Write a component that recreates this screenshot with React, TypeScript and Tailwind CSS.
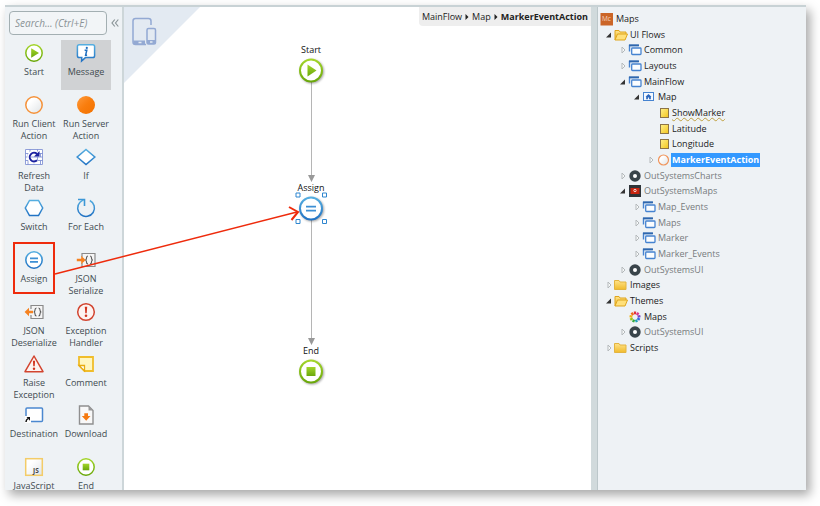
import type { ReactNode } from "react";

/* ---------- toolbox icons (20 x 20) ---------- */

function Gradients() {
  return (
    <svg className="absolute h-0 w-0" aria-hidden="true">
      <defs>
        <linearGradient id="green" x1="0" y1="0" x2="0" y2="1">
          <stop offset="0" stopColor="#a3d52a" />
          <stop offset="1" stopColor="#6aa80a" />
        </linearGradient>
        <linearGradient id="blue" x1="0" y1="0" x2="0" y2="1">
          <stop offset="0" stopColor="#55aee0" />
          <stop offset="1" stopColor="#2273c4" />
        </linearGradient>
        <linearGradient id="orange" x1="0" y1="0" x2="1" y2="1">
          <stop offset="0" stopColor="#ff9a3c" />
          <stop offset="0.5" stopColor="#f97d0d" />
          <stop offset="1" stopColor="#f27200" />
        </linearGradient>
        <linearGradient id="pale" x1="0" y1="0" x2="1" y2="1">
          <stop offset="0.3" stopColor="#ffffff" />
          <stop offset="1" stopColor="#dfe3e6" />
        </linearGradient>
        <linearGradient id="folder" x1="0" y1="0" x2="0" y2="1">
          <stop offset="0" stopColor="#ffe38a" />
          <stop offset="1" stopColor="#f0bb2c" />
        </linearGradient>
        <linearGradient id="yellow" x1="0" y1="0" x2="1" y2="1">
          <stop offset="0" stopColor="#fff08a" />
          <stop offset="1" stopColor="#f3c51c" />
        </linearGradient>
      </defs>
    </svg>
  );
}

function Icon({ children }: { children: ReactNode }) {
  return (
    <svg viewBox="0 0 20 20" className="h-5 w-5 shrink-0" fill="none" aria-hidden="true">
      {children}
    </svg>
  );
}

const icons = {
  start: (
    <Icon>
      <circle cx="10" cy="10" r="8.2" fill="#fff" stroke="url(#green)" strokeWidth="1.5" />
      <path d="M7.2 5.2 15 10l-7.8 4.8z" fill="url(#green)" />
    </Icon>
  ),
  message: (
    <Icon>
      <path d="M3.2 1.8h13.6c1.2 0 1.8.7 1.8 1.8v9.2c0 1.1-.7 1.8-1.8 1.8H9.4L5.600 18l.2-3.400H3.200c-1.100 0-1.800-.7-1.800-1.800V3.600c0-1.100.7-1.800 1.800-1.800z" fill="#fff" stroke="url(#blue)" strokeWidth="1.5" />
      <circle cx="10.8" cy="4.9" r="1.1" fill="#1f6fc0" />
      <path d="M8.6 7.2h2.2l-1.2 5h1.5" stroke="#1f6fc0" strokeWidth="1.5" />
    </Icon>
  ),
  client: (
    <Icon>
      <circle cx="10" cy="10" r="8.2" fill="url(#pale)" stroke="#f5923a" strokeWidth="1.5" />
    </Icon>
  ),
  server: (
    <Icon>
      <circle cx="10" cy="10" r="9" fill="url(#orange)" />
    </Icon>
  ),
  refresh: (
    <Icon>
      <path d="M1 2h18v16H1z" fill="#fff" />
      <path d="M1.5 2.5h17v15h-17zM1.5 6.500h17M1.5 10h17M1.5 13.500h17" stroke="#7486cf" strokeWidth="0.8" />
      <path d="M6 2.5v4M13.500 2.5v4M4 6.500V10M16.500 6.500V10M6 10v3.500M13.500 10v3.500M4 13.500v4M10 13.500v4M16.500 13.500v4" stroke="#7486cf" strokeWidth="0.8" />
      <path d="M13.500 6.400A5 5 0 1 0 13.500 13.600" stroke="#fff" strokeWidth="3.500" />
      <path d="M13 7A4.300 4.300 0 1 0 13 13.200" stroke="#1c22a0" strokeWidth="2" />
      <path d="M15.500 4v5.500H10z" fill="#1c22a0" />
    </Icon>
  ),
  condition: (
    <Icon>
      <path d="M10 2.5 18.8 10 10 17.5 1.2 10z" fill="#fff" stroke="url(#blue)" strokeWidth="1.6" />
    </Icon>
  ),
  switch: (
    <Icon>
      <path d="M5.5 2.5h9L18.7 10l-4.2 7.5h-9L1.3 10z" fill="#fff" stroke="url(#blue)" strokeWidth="1.5" />
    </Icon>
  ),
  forEach: (
    <Icon>
      <path d="M13.800 2.500A8.400 8.400 0 1 1 4 4.200L7.500 1.600" stroke="url(#blue)" strokeWidth="1.5" />
      <path d="M2 1.500h6.500V8" stroke="#3d97d6" strokeWidth="1.6" />
    </Icon>
  ),
  assign: (
    <Icon>
      <circle cx="10" cy="10" r="8.2" fill="#fff" stroke="url(#blue)" strokeWidth="1.6" />
      <path d="M6 8.3h8M6 11.8h8" stroke="#3d8fd4" strokeWidth="1.7" />
    </Icon>
  ),
  serialize: (
    <Icon>
      <path d="M6 7V3.5h13v13H6V13" stroke="#8a8a8a" strokeWidth="1.2" fill="#f5f5f5" />
      <path d="M12 6c-1.5 0-1.5.6-1.5 2 0 1.2-.2 1.8-1.2 2 1 .2 1.2.8 1.2 2 0 1.4 0 2 1.5 2M14 6c1.5 0 1.5.6 1.5 2 0 1.2.2 1.8 1.2 2-1 .2-1.2.8-1.2 2 0 1.4 0 2-1.5 2" stroke="#555" strokeWidth="1.1" />
      <path d="M.8 8.7h4.4V5.8L9.6 10l-4.4 4.2v-2.9H.8z" fill="#f58220" />
    </Icon>
  ),
  deserialize: (
    <Icon>
      <path d="M7 7V3.5h12v13H7V13" stroke="#8a8a8a" strokeWidth="1.2" fill="#f5f5f5" />
      <path d="M12.5 6c-1.5 0-1.5.6-1.5 2 0 1.2-.2 1.8-1.2 2 1 .2 1.2.8 1.2 2 0 1.4 0 2 1.5 2M14.5 6c1.5 0 1.5.6 1.5 2 0 1.2.2 1.8 1.2 2-1 .2-1.2.8-1.2 2 0 1.4 0 2-1.5 2" stroke="#555" strokeWidth="1.1" />
      <path d="M9 8.7H5V5.8L.6 10 5 14.2v-2.9h4z" fill="#f58220" />
    </Icon>
  ),
  exception: (
    <Icon>
      <circle cx="10" cy="10" r="8.3" fill="#fdf3f1" stroke="#d2442f" strokeWidth="1.5" />
      <path d="M8.8 4.8h2.4l-.5 6.4H9.3z" fill="#d2341f" />
      <circle cx="10" cy="13.8" r="1.3" fill="#d2341f" />
    </Icon>
  ),
  raise: (
    <Icon>
      <path d="M10 2 19 17.7H1z" fill="#fdf3f1" stroke="#d2442f" strokeWidth="1.5" strokeLinejoin="round" />
      <path d="M8.9 6.8h2.2l-.4 5.4H9.3z" fill="#d2341f" />
      <circle cx="10" cy="14.7" r="1.2" fill="#d2341f" />
    </Icon>
  ),
  comment: (
    <Icon>
      <path d="M3 3h14v14H8.5L3 11.5z" fill="#fff6c0" stroke="#f0bd2b" strokeWidth="1.8" />
      <path d="M3 11.5h5.5V17z" fill="#fff" stroke="#e8ab10" strokeWidth="1.3" />
    </Icon>
  ),
  destination: (
    <Icon>
      <rect x="2" y="3" width="16.5" height="13.5" rx="1" fill="#fff" stroke="#4b88d0" strokeWidth="1.5" />
      <path d="M1 11h6v7H1z" fill="#fff" />
      <path d="M2 17c0-1.600.5-2.500 2-3.500" stroke="#111" strokeWidth="1.5" />
      <path d="M2.500 12h3.500v3.800z" fill="#111" />
    </Icon>
  ),
  download: (
    <Icon>
      <path d="M3.5 1h9L17 5.5V19H3.5z" fill="#f8f8f8" stroke="#8f8f8f" strokeWidth="1.4" />
      <path d="M12.5 1v4.5H17z" fill="#999" />
      <path d="M8.3 8.2H12v2.9h2.5l-4.3 4.7-4.400-4.700h2.500z" fill="#f57a10" />
    </Icon>
  ),
  javascript: (
    <Icon>
      <rect x="1.7" y="1.7" width="16.6" height="16.6" fill="url(#pale)" stroke="#f3cc68" strokeWidth="1.5" />
      <text x="9" y="16.2" fontSize="6.5" fontWeight="700" fill="#444" fontFamily="Open Sans">JS</text>
    </Icon>
  ),
  end: (
    <Icon>
      <circle cx="10" cy="10" r="8.2" fill="#fff" stroke="url(#green)" strokeWidth="1.5" />
      <rect x="6.7" y="6.7" width="6.6" height="6.6" fill="url(#green)" />
    </Icon>
  ),
};

const tools: { label: string; icon: keyof typeof icons; active?: boolean }[] = [
  { label: "Start", icon: "start" },
  { label: "Message", icon: "message", active: true },
  { label: "Run Client\nAction", icon: "client" },
  { label: "Run Server\nAction", icon: "server" },
  { label: "Refresh\nData", icon: "refresh" },
  { label: "If", icon: "condition" },
  { label: "Switch", icon: "switch" },
  { label: "For Each", icon: "forEach" },
  { label: "Assign", icon: "assign" },
  { label: "JSON\nSerialize", icon: "serialize" },
  { label: "JSON\nDeserialize", icon: "deserialize" },
  { label: "Exception\nHandler", icon: "exception" },
  { label: "Raise\nException", icon: "raise" },
  { label: "Comment", icon: "comment" },
  { label: "Destination", icon: "destination" },
  { label: "Download", icon: "download" },
  { label: "JavaScript", icon: "javascript" },
  { label: "End", icon: "end" },
];

function Toolbox() {
  return (
    <aside className="flex w-[119px] shrink-0 flex-col overflow-hidden border-r-2 border-[#cdd6d9] bg-[#eef2f5]">
      <div className="flex items-center gap-1 pt-1 pl-1">
        <input
          type="search"
          aria-label="Search"
          placeholder="Search... (Ctrl+E)"
          className="h-6 w-[98px] rounded-[4px] border border-[#a3afb2] bg-[#f2f5f7] px-[5px] text-[10px] italic placeholder:text-[#8a9396]"
        />
        <button type="button" aria-label="Collapse toolbox" className="text-[#8b9598]">
          <svg viewBox="0 0 8 8" className="h-2 w-2" fill="none" stroke="currentColor" strokeWidth="1.2">
            <path d="M3.8.5 1 4l2.8 3.5M7.3.5 4.5 4l2.8 3.5" />
          </svg>
        </button>
      </div>
      <div className="mt-[5px] ml-[3px] grid h-[466px] shrink-0 auto-rows-fr grid-cols-[52px_52px]">
        {tools.map((tool) => (
          <button
            key={tool.label}
            type="button"
            className={`mx-px flex h-[50px] flex-col items-center gap-[3px] pt-[3px] text-[9px] leading-3 whitespace-pre text-[#414b50] ${tool.active ? "bg-[#d0d2d4]" : ""}`}
          >
            {icons[tool.icon]}
            <span>{tool.label}</span>
          </button>
        ))}
      </div>
    </aside>
  );
}

/* ---------- flow canvas ---------- */

function FlowNode({ kind, label, className }: { kind: "start" | "assign" | "end"; label: string; className: string }) {
  return (
    <div className={`absolute left-[162px] flex w-[50px] flex-col items-center text-[9px] leading-3 text-[#111] ${className}`}>
      <span>{label}</span>
      <svg viewBox="0 0 36 32" className="h-8 w-9 drop-shadow-[1px_1px_1px_rgba(0,0,0,0.35)]" fill="none" aria-hidden="true">
        <circle cx="18" cy="14.5" r="11" fill="#fff" stroke={kind === "assign" ? "url(#blue)" : "url(#green)"} strokeWidth="2" />
        {kind === "start" && <path d="M14.5 8.5l9 6-9 6z" fill="url(#green)" />}
        {kind === "end" && <path d="M13.5 10h9v9h-9z" fill="url(#green)" />}
        {kind === "assign" && <path d="M13 12.7h10M13 16.7h10" stroke="#3d8fd4" strokeWidth="1.7" />}
      </svg>
    </div>
  );
}

function Canvas() {
  return (
    <main className="relative min-w-0 flex-1 overflow-hidden bg-white">
      <svg viewBox="0 0 76 76" className="absolute top-0 left-0 h-[76px] w-[76px]" fill="none" aria-hidden="true">
        <path d="M0 0h76L0 76z" fill="#e3eaf2" />
        <g transform="translate(0 1)">
          <path d="M27 17v-4c0-1.5-1-2.5-2.5-2.5h-13C10 10.5 9 11.5 9 13v21c0 1.5 1 2.5 2.5 2.5H22" stroke="#93a9d3" strokeWidth="1.5" />
          <path d="M9 32.5h12v4H10z" fill="#93a9d3" />
          <rect x="23" y="20.5" width="8.5" height="15.5" rx="1.5" stroke="#93a9d3" strokeWidth="1.5" />
          <path d="M23 32h8.5v4H23z" fill="#93a9d3" />
          <path d="M14.5 34.500h3M26 34h2.5" stroke="#e3eaf2" strokeWidth="1.5" />
        </g>
      </svg>

      <nav aria-label="Breadcrumb" className="absolute top-0 right-0 flex h-[19px] items-center gap-[3px] rounded-bl bg-[#eeeeee] px-[3px] text-[9px] text-[#222]">
        <a href="#mainflow">MainFlow</a>
        <svg viewBox="0 0 4 6" className="h-[6px] w-1" aria-hidden="true"><path d="M.5 0l3 3-3 3z" fill="#222" /></svg>
        <a href="#map">Map</a>
        <svg viewBox="0 0 4 6" className="h-[6px] w-1" aria-hidden="true"><path d="M.5 0l3 3-3 3z" fill="#222" /></svg>
        <strong className="font-bold">MarkerEventAction</strong>
      </nav>

      <svg viewBox="0 0 10 270" className="absolute top-[75px] left-[182px] h-[270px] w-[10px]" aria-hidden="true">
        <path d="M5.5 0v96M5.5 138v122" stroke="#b5b5b5" />
        <path d="M2 93h7l-3.500 7zM2 256h7l-3.500 7z" fill="#999" />
      </svg>

      <FlowNode kind="start" label="Start" className="top-[37px]" />
      <FlowNode kind="assign" label="Assign" className="top-[175px]" />
      <FlowNode kind="end" label="End" className="top-[338px]" />

      <svg viewBox="0 0 32 32" className="absolute top-[185px] left-[171px] h-8 w-8" fill="#fff" stroke="#2f86cf" aria-hidden="true">
        <path d="M1 1h4v4H1zM27.500 1h4v4h-4zM1 27.500h4v4H1zM27.500 27.500h4v4h-4z" />
      </svg>
    </main>
  );
}

/* ---------- module tree ---------- */

function Glyph({ children }: { children: ReactNode }) {
  return (
    <svg viewBox="0 0 14 14" className="h-[14px] w-[14px] shrink-0" fill="none" aria-hidden="true">
      {children}
    </svg>
  );
}

const wheel = ["#e0303a", "#d8388c", "#7a3fc0", "#2f6fe0", "#1fa0b8", "#35a83c", "#9ac41c", "#f0b012", "#ee6a1a"];

const glyphs = {
  module: (
    <Glyph>
      <path d="M.5 1H13v12.500H.5z" fill="#cb6527" />
      <text x="2" y="8.500" fontSize="6.500" fill="#f6d5bf" fontFamily="Open Sans">Mc</text>
    </Glyph>
  ),
  folderOpen: (
    <Glyph>
      <path d="M1 12V2.5h4l1 1.5h6v2" fill="url(#folder)" stroke="#dfa51c" />
      <path d="M1 12 3.5 6h10L11 12z" fill="#ffe07a" stroke="#dfa51c" />
    </Glyph>
  ),
  folder: (
    <Glyph>
      <path d="M.5 11.500v-9H5L6 4h6v7.500z" fill="url(#folder)" stroke="#e3b440" />
    </Glyph>
  ),
  flow: (
    <Glyph>
      <path d="M1.500 8.500V2.500h9" stroke="#4583d0" strokeWidth="1.4" />
      <path d="M1 2.300h10" stroke="#2f67ad" strokeWidth="1.8" />
      <rect x="3.700" y="5" width="9.300" height="6.500" rx="0.8" fill="#fbfdff" stroke="#4583d0" strokeWidth="1.3" />
    </Glyph>
  ),
  screen: (
    <Glyph>
      <rect x="1.5" y="2.5" width="10" height="8" fill="#f4f9ff" stroke="#4583d0" />
      <path d="M6.500 4 9.500 6.800H8.800V9.200H7.100V7.600H5.900V9.200H4.200V6.800H3.500z" fill="#2b66bc" />
    </Glyph>
  ),
  variable: (
    <Glyph>
      <rect x="4.500" y="2.5" width="8" height="9" fill="url(#yellow)" stroke="#8d7446" />
    </Glyph>
  ),
  action: (
    <Glyph>
      <circle cx="7.5" cy="7" r="5" fill="url(#pale)" stroke="#f0945a" strokeWidth="1.2" />
    </Glyph>
  ),
  dark: (
    <Glyph>
      <circle cx="7" cy="7" r="5.7" fill="#39444a" />
      <circle cx="7" cy="7" r="2" fill="#fff" />
    </Glyph>
  ),
  maps: (
    <Glyph>
      <path d="M1 1h12v12H1z" fill="#2e3438" />
      <path d="M2.5 4h9v6h-9z" fill="#c8250f" />
      <circle cx="7" cy="6.5" r="1.2" stroke="#fff" strokeWidth=".8" />
    </Glyph>
  ),
  theme: (
    <Glyph>
      {wheel.map((color, i) => (
        <path key={color} d="M7 1.500v2.800" stroke={color} strokeWidth="2.3" transform={`rotate(${i * 40} 7 7)`} />
      ))}
    </Glyph>
  ),
};

type Row = {
  name: string;
  level: 0 | 1 | 2 | 3 | 4;
  glyph: keyof typeof glyphs;
  arrow?: "open" | "closed";
  style?: "muted" | "warning" | "selected";
};

const rows: Row[] = [
  { name: "Maps", level: 0, glyph: "module" },
  { name: "UI Flows", level: 1, glyph: "folderOpen", arrow: "open" },
  { name: "Common", level: 2, glyph: "flow", arrow: "closed" },
  { name: "Layouts", level: 2, glyph: "flow", arrow: "closed" },
  { name: "MainFlow", level: 2, glyph: "flow", arrow: "open" },
  { name: "Map", level: 3, glyph: "screen", arrow: "open" },
  { name: "ShowMarker", level: 4, glyph: "variable", style: "warning" },
  { name: "Latitude", level: 4, glyph: "variable" },
  { name: "Longitude", level: 4, glyph: "variable" },
  { name: "MarkerEventAction", level: 4, glyph: "action", arrow: "closed", style: "selected" },
  { name: "OutSystemsCharts", level: 2, glyph: "dark", arrow: "closed", style: "muted" },
  { name: "OutSystemsMaps", level: 2, glyph: "maps", arrow: "open", style: "muted" },
  { name: "Map_Events", level: 3, glyph: "flow", arrow: "closed", style: "muted" },
  { name: "Maps", level: 3, glyph: "flow", arrow: "closed", style: "muted" },
  { name: "Marker", level: 3, glyph: "flow", arrow: "closed", style: "muted" },
  { name: "Marker_Events", level: 3, glyph: "flow", arrow: "closed", style: "muted" },
  { name: "OutSystemsUI", level: 2, glyph: "dark", arrow: "closed", style: "muted" },
  { name: "Images", level: 1, glyph: "folder", arrow: "closed" },
  { name: "Themes", level: 1, glyph: "folderOpen", arrow: "open" },
  { name: "Maps", level: 2, glyph: "theme" },
  { name: "OutSystemsUI", level: 2, glyph: "dark", arrow: "closed", style: "muted" },
  { name: "Scripts", level: 1, glyph: "folder", arrow: "closed" },
];

const indent = ["pl-[2px]", "pl-[6px]", "pl-[20px]", "pl-[34px]", "pl-[48px]"];

const nameStyle = {
  plain: "text-[#1c1c1c]",
  muted: "text-[#777b7d]",
  warning: "text-[#1c1c1c] underline decoration-[#c0a040] decoration-wavy decoration-1 underline-offset-1",
  selected: "bg-[#3399ff] font-bold text-white",
};

function ModuleTree() {
  return (
    <aside className="w-[209px] shrink-0 border-l border-[#bcc7ca] bg-[#eef2f5]">
      <ul role="tree" aria-label="Module" className="mt-1 grid h-[345px] auto-rows-fr text-[9px] leading-[14px]">
        {rows.map((row, i) => (
          <li key={i} role="treeitem" aria-selected={row.style === "selected"} className={`flex min-h-0 items-center ${indent[row.level]}`}>
            {row.level > 0 && (
              <svg viewBox="0 0 10 10" className="h-[10px] w-[10px] shrink-0" fill="none" aria-hidden="true">
                {row.arrow === "open" && <path d="M7 2.5v5H2z" fill="#333" />}
                {row.arrow === "closed" && <path d="M4 2 7 5 4 8z" stroke="#b4b9bb" fill="#f8fafa" />}
              </svg>
            )}
            {glyphs[row.glyph]}
            <span className={`ml-px px-px ${nameStyle[row.style ?? "plain"]}`}>{row.name}</span>
          </li>
        ))}
      </ul>
    </aside>
  );
}

export default function App() {
  return (
    <div className="h-screen bg-white pt-[5px] pr-[14px] pb-4 pl-[5px] font-['Open_Sans','Noto_Sans',sans-serif]">
      <Gradients />
      <div className="relative flex h-full border-t-2 border-[#c8d2d5] shadow-[4px_5px_10px_rgba(0,0,0,0.35)]">
        <Toolbox />
        <Canvas />
        <div className="w-[6px] shrink-0 bg-[#d1dadc]" />
        <ModuleTree />
        <svg viewBox="0 0 310 300" className="pointer-events-none absolute top-0 left-0 h-[300px] w-[310px]" fill="none" stroke="#ee2b0c" aria-hidden="true">
          <rect x="9" y="236" width="40" height="50" strokeWidth="2" />
          <path d="M50 267 292 205" strokeWidth="1.5" />
          <path d="M284 200l9 5-6.500 8" strokeWidth="2" />
        </svg>
      </div>
    </div>
  );
}
